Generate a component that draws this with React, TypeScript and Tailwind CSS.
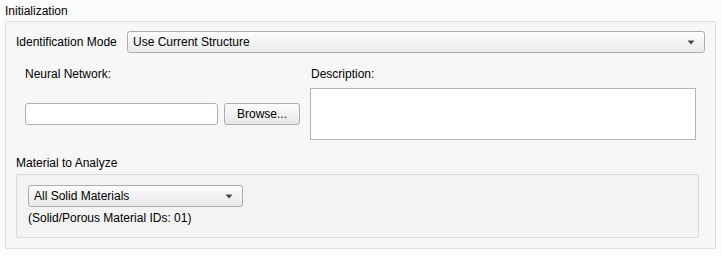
const font = { fontFamily: '"Liberation Sans", Arial, sans-serif' };

function Arrow() {
  return (
    <svg width="8" height="5" viewBox="0 0 8 5" className="shrink-0">
      <path d="M0.5 0.5 H7.5 L4 4.5 Z" fill="#444" />
    </svg>
  );
}

function ComboBox({ value, width }: { value: string; width: string }) {
  return (
    <div
      className={`${width} h-[22px] flex items-center justify-between pl-[5px] pr-[9px] border border-[#acacac] rounded-[3px] bg-gradient-to-b from-[#fdfdfd] to-[#e9e9e9] text-[12px] text-black`}
    >
      <span>{value}</span>
      <Arrow />
    </div>
  );
}

export default function App() {
  return (
    <div className="w-[722px] h-[256px] bg-[#fcfcfc] text-black text-[12px]" style={font}>
      <div className="h-[21px] pl-[5px] leading-[22px]">Initialization</div>

      <div className="ml-[5px] w-[711px] h-[228px] border border-[#dcdcdc] rounded-[2px] bg-[#f7f7f7] pl-[10px] pt-[9px]">
        {/* identification mode */}
        <div className="flex items-center h-[22px]">
          <div className="w-[111px]">Identification Mode</div>
          <ComboBox value="Use Current Structure" width="w-[578px]" />
        </div>

        {/* neural network + description */}
        <div className="flex mt-[12px]">
          <div className="w-[294px] pl-[9px]">
            <div className="h-[18px] leading-[18px]">Neural Network:</div>
            <div className="flex mt-[20px]">
              <div className="w-[193px] h-[22px] bg-white border border-[#b2b2b2] rounded-[3px]" />
              <button className="ml-[6px] w-[76px] h-[22px] border border-[#adadad] rounded-[3px] bg-gradient-to-b from-[#fdfdfd] to-[#e6e6e6] text-[12px]">
                Browse...
              </button>
            </div>
          </div>
          <div>
            <div className="h-[18px] leading-[18px] pl-[1px]">Description:</div>
            <div className="mt-[5px] w-[386px] h-[52px] bg-white border border-[#b4b4b4]" />
          </div>
        </div>

        {/* material */}
        <div className="mt-[14px] h-[18px] leading-[18px]">Material to Analyze</div>
        <div className="mt-[2px] w-[683px] h-[64px] border border-[#dadada] rounded-[2px] bg-[#f3f3f3] pl-[11px] pt-[10px]">
          <ComboBox value="All Solid Materials" width="w-[215px]" />
          <div className="mt-[2px] h-[18px] leading-[18px]">(Solid/Porous Material IDs: 01)</div>
        </div>
      </div>
    </div>
  );
}
